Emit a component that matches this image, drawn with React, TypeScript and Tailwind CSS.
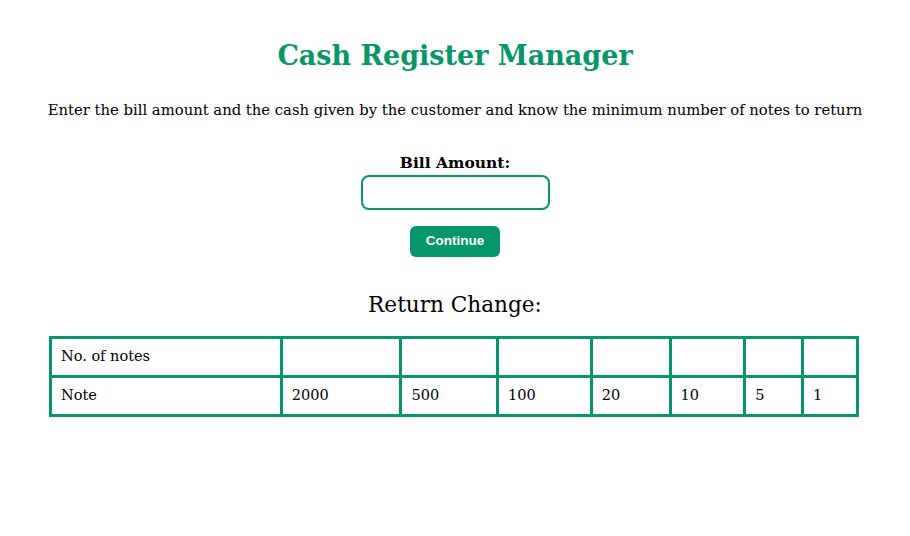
import React, { useState } from "react";

const notes = [2000, 500, 100, 20, 10, 5, 1];
const colWidths = ["w-[232px]", "w-[120px]", "w-[97px]", "w-[94px]", "w-[79px]", "w-[75px]", "w-[58px]", "w-[55px]"];

const App = () => {
  const [bill, setBill] = useState("");

  return (
    <div className="min-h-screen bg-white font-['DejaVu_Serif',serif] text-black">
      <div className="flex flex-col items-center pt-[34px]">
        <h1 className="text-[27px] leading-[44px] font-bold text-[#069669]">Cash Register Manager</h1>
        <p className="mt-[20px] text-[14.8px] leading-[24px]">
          Enter the bill amount and the cash given by the customer and know the minimum number of notes to return
        </p>

        <label htmlFor="bill" className="mt-[29px] text-[15.5px] leading-[24px] font-bold">
          Bill Amount:
        </label>
        <input
          id="bill"
          value={bill}
          onChange={(e) => setBill(e.target.value)}
          className="w-[189px] h-[35px] rounded-[8px] border-2 border-[#069669] px-2 outline-none"
        />
        <button className="mt-[16px] w-[90px] h-[31px] rounded-[6px] bg-[#069669] text-white text-[13.5px] font-bold font-['Liberation_Sans',sans-serif]">
          Continue
        </button>

        <h2 className="mt-[33px] text-[21.6px] leading-[30px]">Return Change:</h2>
      </div>

      <div className="px-[49px] mt-[16px]">
        <table className="w-[810px] border-collapse border-[3px] border-[#069669] text-[14.5px]">
          <tbody>
            <tr className="h-[39px]">
              <td className={`${colWidths[0]} border-[3px] border-[#069669] px-[9px]`}>No. of notes</td>
              {notes.map((n, i) => (
                <td key={n} className={`${colWidths[i + 1]} border-[3px] border-[#069669] px-[9px]`}></td>
              ))}
            </tr>
            <tr className="h-[39px]">
              <td className="border-[3px] border-[#069669] px-[9px]">Note</td>
              {notes.map((n) => (
                <td key={n} className="border-[3px] border-[#069669] px-[9px]">
                  {n}
                </td>
              ))}
            </tr>
          </tbody>
        </table>
      </div>
    </div>
  );
};

export default App;
